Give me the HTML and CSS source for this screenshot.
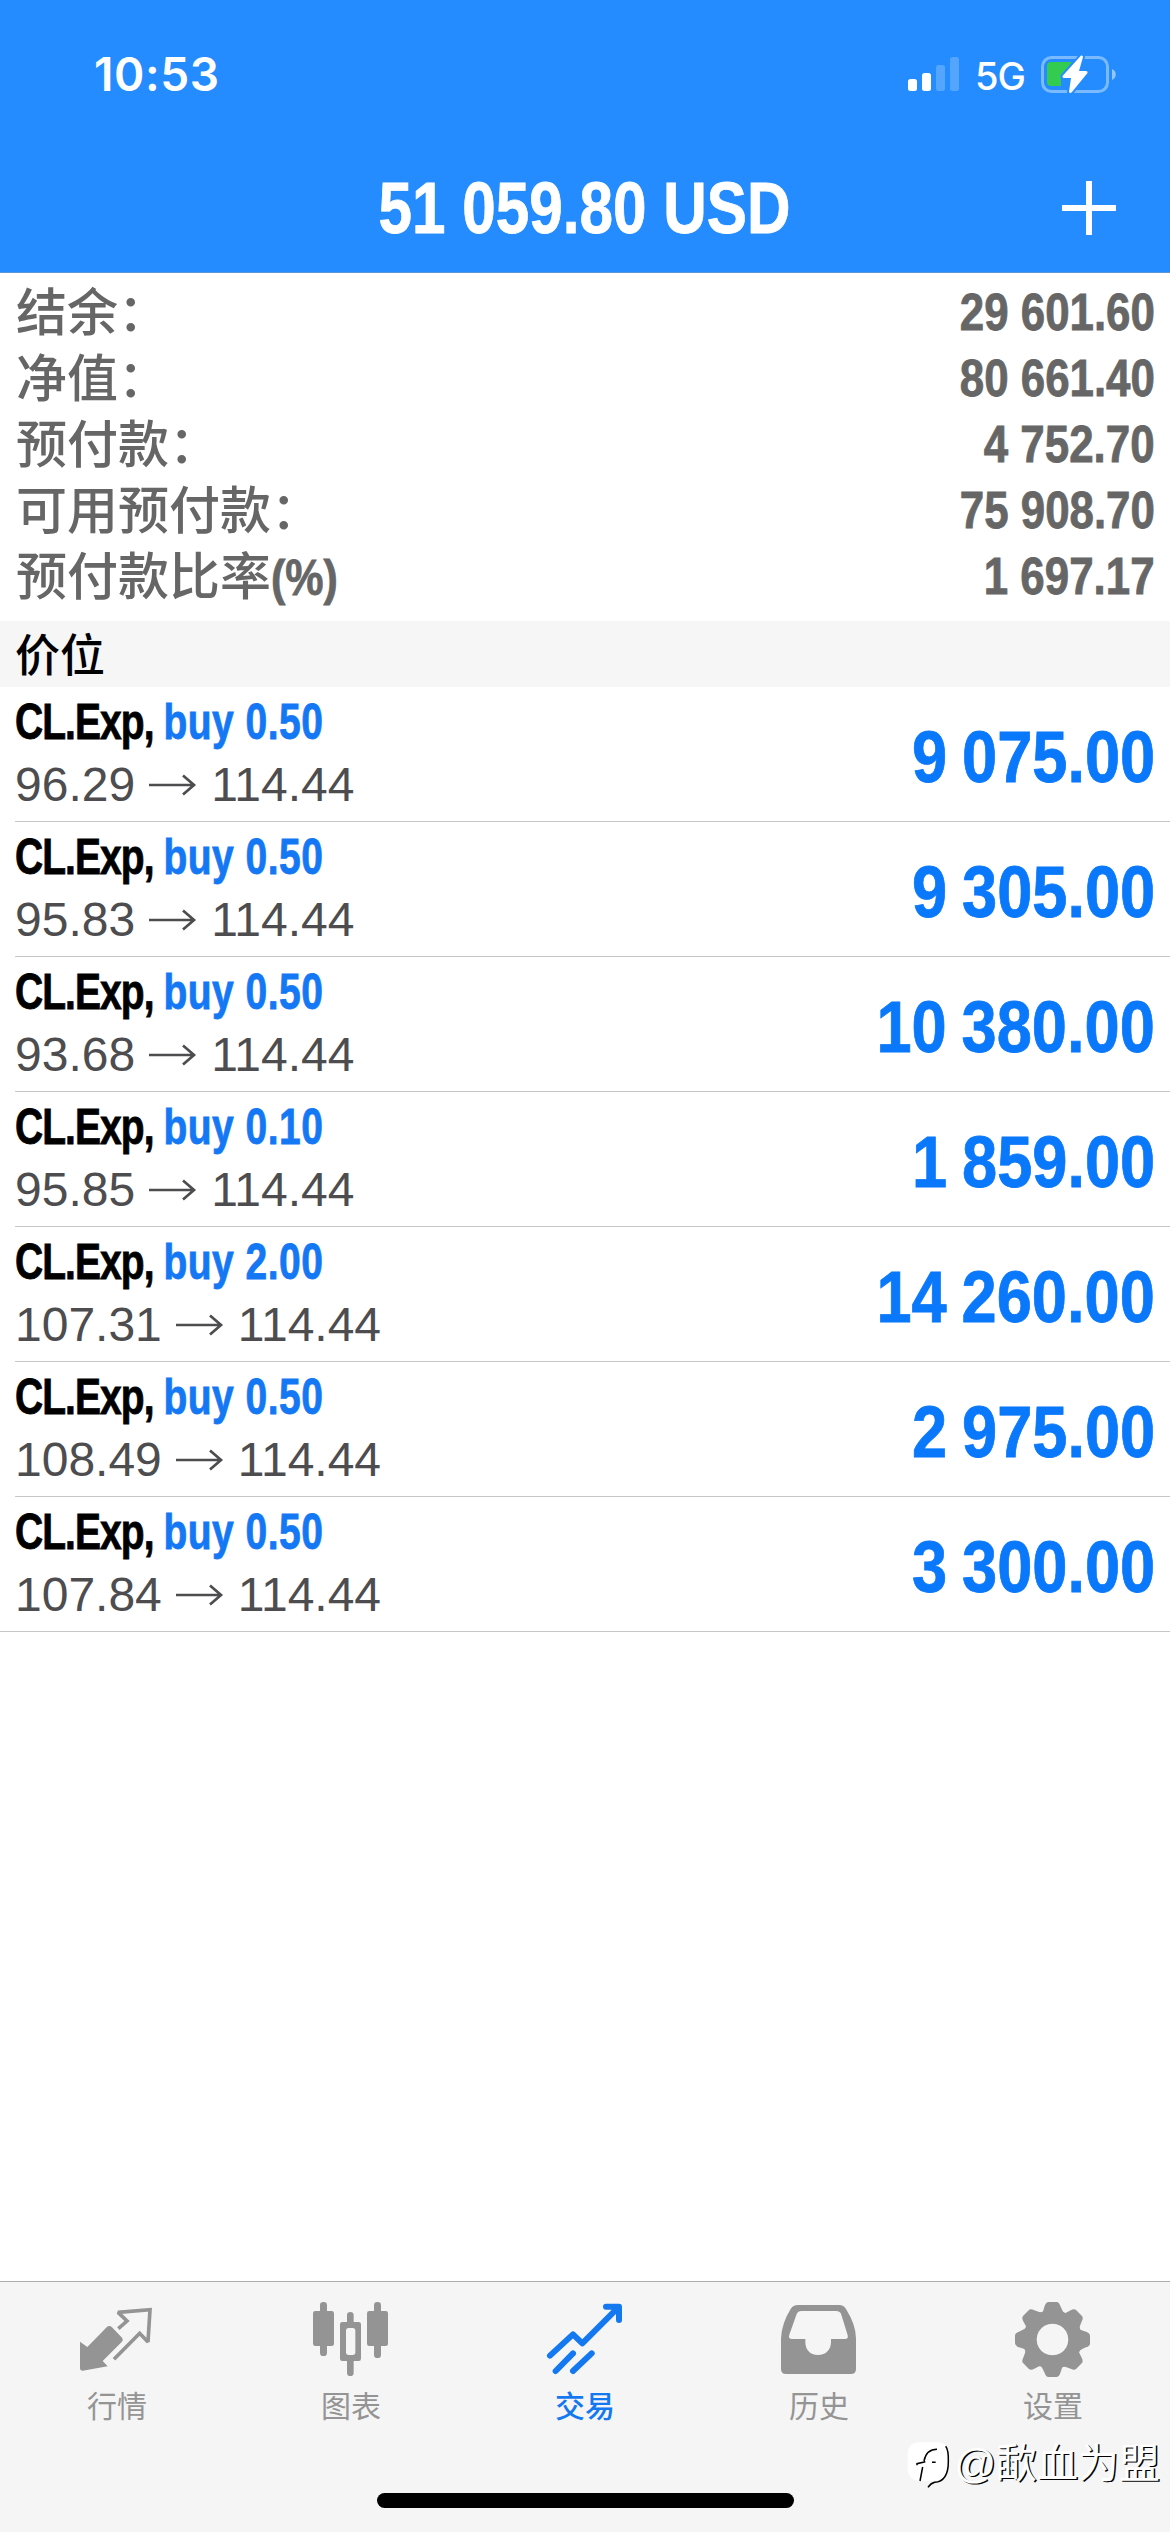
FILE: index.html
```html
<!DOCTYPE html>
<html lang="zh-CN">
<head>
    <meta charset="UTF-8">
    <meta name="viewport" content="width=device-width, initial-scale=1.0">
    <title>交易</title>
    <link rel="stylesheet" href="styles.css">
</head>
<body>

    <header>
        <div class="status-bar">
            <span class="time">10:53</span>
            <div class="status-icons">
                <svg class="signal" width="52" height="36" viewBox="0 0 52 36">
                    <rect x="0" y="23" width="9" height="12" rx="2.5" fill="#fff"/>
                    <rect x="14" y="17" width="9" height="18" rx="2.5" fill="#fff"/>
                    <rect x="28" y="9" width="9" height="26" rx="2.5" fill="#fff" opacity="0.22"/>
                    <rect x="42" y="1" width="9" height="34" rx="2.5" fill="#fff" opacity="0.22"/>
                </svg>
                <span class="network">5G</span>
                <svg class="battery" width="76" height="40" viewBox="0 0 76 40">
                    <rect x="1.5" y="3.5" width="65" height="34" rx="9" fill="none" stroke="#fff" stroke-opacity="0.4" stroke-width="3"/>
                    <path d="M71 15c5 2 5 9 0 11z" fill="#fff" opacity="0.5"/>
                    <path d="M10 8H31L20 23V32H10a4 4 0 0 1-4-4V12a4 4 0 0 1 4-4z" fill="#33cb50"/>
                    <path d="M40 1.500L21.500 22Q21 24 23 24H30L28 38Q29 40 31 38L46.500 19Q47 17 45 17H38L42 3Q42 1 40 1.500z" fill="#fff" stroke="#248cff" stroke-width="4" paint-order="stroke" stroke-linejoin="round"/>
                </svg>
            </div>
        </div>
        <div class="title-bar">
            <h1>51 059.80 USD</h1>
            <svg class="add" width="54" height="54" viewBox="0 0 54 54">
                <path d="M27 0V54M0 27H54" stroke="#fff" stroke-width="6"/>
            </svg>
        </div>
    </header>

    <!-- Account summary -->
    <section class="account">
        <div class="account-row"><span>结余：</span><b>29 601.60</b></div>
        <div class="account-row"><span>净值：</span><b>80 661.40</b></div>
        <div class="account-row"><span>预付款：</span><b>4 752.70</b></div>
        <div class="account-row"><span>可用预付款：</span><b>75 908.70</b></div>
        <div class="account-row"><span>预付款比率<i>(%)</i></span><b>1 697.17</b></div>
    </section>

    <!-- Open positions -->
    <h2>价位</h2>
    <section class="positions" id="positions"></section>

    <nav>
        <a class="tab">
            <svg viewBox="231 90 240 240">
                <path d="M240 215L262 231L320 172Q328 164 336 172L366 203Q371 210 365 216L308 273L323 289L248 302Q240 303 240 295z" fill="currentColor"/>
                <path d="M355 176L381 153L354 127L450 119L444 216L419 190L342 268" fill="none" stroke="currentColor" stroke-width="11" stroke-miterlimit="2"/>
            </svg>
            <span>行情</span>
        </a>
        <a class="tab">
            <svg viewBox="933 90 240 240" fill="currentColor">
                <rect x="960" y="96" width="21" height="162" rx="10"/>
                <rect x="939" y="123" width="63" height="105" rx="7"/>
                <rect x="1122" y="96" width="21" height="168" rx="10"/>
                <rect x="1101" y="123" width="63" height="105" rx="7"/>
                <rect x="1041" y="126" width="20" height="45" rx="10"/>
                <rect x="1041" y="260" width="20" height="58" rx="10"/>
                <path fill-rule="evenodd" d="M1027 156h49q7 0 7 7v103q0 7-7 7h-49q-7 0-7-7V163q0-7 7-7zM1046 174q-8 0-8 8v65q0 8 8 8h12q8 0 8-8v-65q0-8-8-8z"/>
            </svg>
            <span>图表</span>
        </a>
        <a class="tab active">
            <svg viewBox="435 90 240 240" fill="none" stroke="currentColor" stroke-width="18" stroke-linecap="round">
                <path d="M450 257L519 193L547 220L652 115M618 110.500H657V150" stroke-linejoin="round"/>
                <path d="M467 303L519 250M519 303L575 250"/>
            </svg>
            <span>交易</span>
        </a>
        <a class="tab">
            <svg viewBox="27 90 240 240">
                <path fill="currentColor" fill-rule="evenodd" d="M84 105H208Q221 105 228 117Q258 165 258 205V297Q258 312 243 312H48Q33 312 33 297V205Q35 160 62 117Q69 105 84 105zM94 123Q84 123 80 132L58 194Q54 207 66 207H106V216C106 239 120 255 144 255S183 239 183 216V207H225Q236 207 233 196L214 134Q211 123 198 123z"/>
            </svg>
            <span>历史</span>
        </a>
        <a class="tab">
            <svg viewBox="729 90 240 240" fill="currentColor">
                <defs>
                    <path id="tooth" d="M811 136Q822 122 824 108Q828 96 836 96H860Q867 96 871 108Q876 122 887 136z"/>
                </defs>
                <path fill-rule="evenodd" d="M847.500 120a88.500 88.500 0 1 0 0.100 0zM847.500 161a47.500 47.500 0 1 1-0.100 0z"/>
                <use href="#tooth"/>
                <use href="#tooth" transform="rotate(45 847.500 208.500)"/>
                <use href="#tooth" transform="rotate(90 847.500 208.500)"/>
                <use href="#tooth" transform="rotate(135 847.500 208.500)"/>
                <use href="#tooth" transform="rotate(180 847.500 208.500)"/>
                <use href="#tooth" transform="rotate(225 847.500 208.500)"/>
                <use href="#tooth" transform="rotate(270 847.500 208.500)"/>
                <use href="#tooth" transform="rotate(315 847.500 208.500)"/>
            </svg>
            <span>设置</span>
        </a>
        <div class="home-indicator"></div>
        <div class="watermark">
            <svg width="44" height="48" viewBox="412 525 132 144">
                <path d="M445 532H505Q537 534 537 570V610Q535 640 500 648H445Q414 642 414 610V565Q416 534 445 532z" fill="#fff"/>
                <path d="M451 648L459 606M463 588Q470 553 502 553M442 601V596L467 590M487 592H498" fill="none" stroke="#000" stroke-width="4.500"/>
                <path d="M528 544Q537 555 536 590C536 635 520 650 495 652Q483 655 475 667" fill="none" stroke="#000" stroke-width="4.500"/>
            </svg>
            <span>@歃血为盟</span>
        </div>
    </nav>

    <script>
        const positions = [
            { volume: '0.50', open: '96.29', profit: '9 075.00' },
            { volume: '0.50', open: '95.83', profit: '9 305.00' },
            { volume: '0.50', open: '93.68', profit: '10 380.00' },
            { volume: '0.10', open: '95.85', profit: '1 859.00' },
            { volume: '2.00', open: '107.31', profit: '14 260.00' },
            { volume: '0.50', open: '108.49', profit: '2 975.00' },
            { volume: '0.50', open: '107.84', profit: '3 300.00' }
        ];

        const list = document.getElementById('positions');

        positions.forEach(item => {
            const row = document.createElement('div');
            row.className = 'position';
            row.innerHTML = `
                <div class="info">
                    <div class="symbol">CL.Exp, <span>buy ${item.volume}</span></div>
                    <div class="price">
                        <span>${item.open}</span>
                        <svg width="48" height="22" viewBox="0 0 48 22"><path d="M0 11H45M34 1.500L45 11L34 20.500" fill="none" stroke="#4d4d4f" stroke-width="2.700"/></svg>
                        <span>114.44</span>
                    </div>
                </div>
                <div class="profit">${item.profit}</div>
            `;
            list.appendChild(row);
        });
    </script>

</body>
</html>
```
FILE: styles.css
```css
* {
    box-sizing: border-box;
}
body {
    font-family: "Liberation Sans", "Noto Sans CJK SC", sans-serif;
    margin: 0;
    height: 2532px;
    display: flex;
    flex-direction: column;
    background-color: #fff;
    overflow: hidden;
}
header {
    background-color: #248cff;
    color: white;
    height: 273px;
    flex: none;
    border-bottom: 1px solid #5b96d8;
}
.status-bar {
    display: flex;
    justify-content: space-between;
    align-items: center;
    height: 148px;
    padding: 0 53px 0 94px;
}
.time {
    font: 600 46px/60px Inter, sans-serif;
    letter-spacing: 0.6px;
}
.status-icons {
    display: flex;
    align-items: center;
}
.network {
    font: 500 38px/50px Inter, sans-serif;
    width: 49px;
    margin: 3px 17px 0 15px;
    letter-spacing: -1px;
}
.title-bar {
    display: grid;
    grid-template-columns: 54px 1fr 54px;
    align-items: center;
    height: 120px;
    padding-right: 54px;
    padding-left: 53px;
}
/* condensed bold headings and numbers */
h1,
.account-row b,
.account-row i,
.symbol,
.profit {
    font-family: "Liberation Sans", sans-serif;
    font-weight: bold;
    white-space: nowrap;
    -webkit-text-stroke: 0.8px currentColor;
}
h1 {
    grid-column: 2;
    margin: 0;
    font-size: 73px;
    line-height: 82px;
    text-align: center;
    transform: scaleX(0.825);
}
.add {
    justify-self: end;
}
.account {
    height: 348px;
    flex: none;
    padding: 6px 15px 0 16px;
    color: #666;
}
.account-row {
    display: flex;
    justify-content: space-between;
    height: 66px;
    line-height: 60px;
}
.account-row span {
    font-family: "Noto Sans CJK SC", sans-serif;
    font-size: 51px;
    font-weight: 500;
}
.account-row i {
    display: inline-block;
    font-style: normal;
    font-size: 50px;
    transform: scaleX(0.86);
    transform-origin: left;
}
.account-row b {
    font-size: 51px;
    line-height: 68px;
    transform: scaleX(0.86);
    transform-origin: right;
}
h2 {
    flex: none;
    margin: 0;
    height: 66px;
    padding-left: 15px;
    background-color: #f6f6f6;
    color: #000;
    font: 500 45px/63px "Noto Sans CJK SC", sans-serif;
}
.position {
    display: flex;
    justify-content: space-between;
    height: 135px;
    margin-left: 15px;
    padding: 5px 15px 0 0;
    border-bottom: 1px solid #c4c6c8;
}
.position:last-child {
    margin-left: 0;
    padding-left: 15px;
}
.symbol {
    font-size: 50px;
    line-height: 60px;
    margin-bottom: 2px;
    letter-spacing: -1.2px;
    color: #000;
    transform: scaleX(0.78);
    transform-origin: left;
}
.symbol span {
    letter-spacing: 0.6px;
    color: #1478f5;
}
.price {
    display: flex;
    align-items: center;
    gap: 14px;
    font-size: 48px;
    line-height: 62px;
    color: #4d4d4f;
}
.profit {
    font-size: 73px;
    line-height: 130px;
    word-spacing: -3px;
    color: #0a78fa;
    transform: scaleX(0.865);
    transform-origin: right;
}
nav {
    position: relative;
    display: flex;
    height: 251px;
    flex: none;
    margin-top: auto;
    border-top: 1px solid #adadad;
    background-color: #f5f5f5;
}
.tab {
    flex: 1;
    display: flex;
    flex-direction: column;
    align-items: center;
    padding-top: 18px;
    color: #949494;
    font: 400 30px/44px "Noto Sans CJK SC", sans-serif;
}
.tab svg {
    width: 80px;
    height: 80px;
    margin-bottom: 2px;
}
.active {
    color: #1478f0;
    font-weight: 500;
}
.home-indicator {
    position: absolute;
    left: 377px;
    bottom: 24px;
    width: 417px;
    height: 15px;
    border-radius: 8px;
    background-color: #000;
}
.watermark {
    position: absolute;
    right: 10px;
    bottom: 38px;
    display: flex;
    align-items: center;
    gap: 3px;
    font: 400 41px/60px "Liberation Sans", "Noto Sans CJK SC", sans-serif;
    color: #fff;
    text-shadow: 1.5px 1px 0 #000;
}
```
